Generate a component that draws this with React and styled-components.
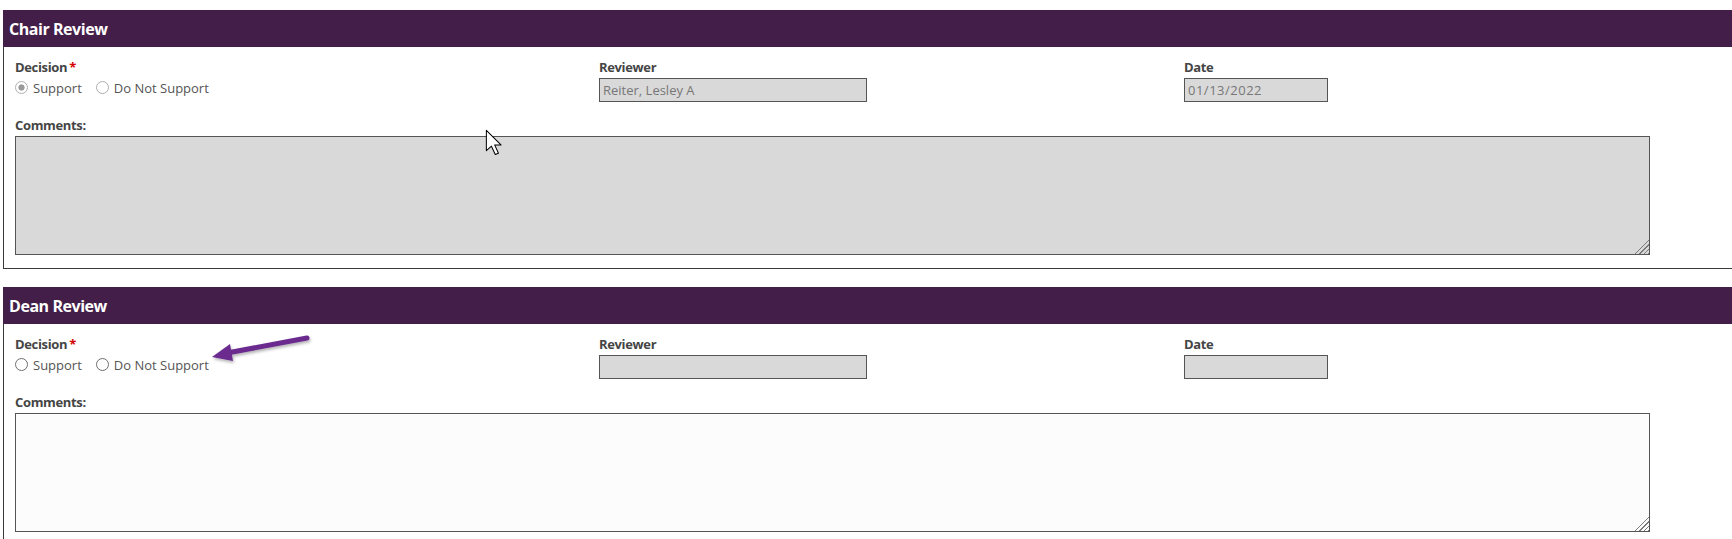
import React from "react";
import styled, { createGlobalStyle } from "styled-components";

const GlobalStyle = createGlobalStyle`
  html, body {
    margin: 0;
    padding: 0;
    background: #ffffff;
    overflow: hidden;
  }
  body {
    font-family: "Open Sans", "Liberation Sans", sans-serif;
  }
`;

function App() {
  return (
    <Page>
      <GlobalStyle />
      <ReviewPanel
        title="Chair Review"
        locked={true}
        decision="support"
        reviewer="Reiter, Lesley A"
        date="01/13/2022"
      />
      <ReviewPanel title="Dean Review" locked={false} decision="" reviewer="" date="" />

      <Annotation width="120" height="40" viewBox="0 0 120 40">
        <defs>
          <filter id="arrowShadow" x="-20%" y="-50%" width="140%" height="200%">
            <feDropShadow dx="1" dy="2" stdDeviation="1.5" floodColor="#000" floodOpacity="0.3" />
          </filter>
        </defs>
        <g filter="url(#arrowShadow)">
          <line x1="104" y1="6" x2="24" y2="21" stroke="#6a2a8e" strokeWidth="5" strokeLinecap="round" />
          <path d="M9 25 L27 12 L30 29 Z" fill="#6a2a8e" />
        </g>
      </Annotation>

      <Cursor width="18" height="28" viewBox="0 0 14 22">
        <path
          d="M1 1 L1 17 L5 13.5 L8 20 L10.5 19 L7.5 12.5 L12.5 12.5 Z"
          fill="#ffffff"
          stroke="#000000"
          strokeWidth="0.8"
          strokeLinejoin="round"
        />
      </Cursor>
    </Page>
  );
}

function ReviewPanel({ title, locked, decision, reviewer, date }) {
  const name = title.replace(" ", "");
  return (
    <Panel>
      <Header>{title}</Header>
      <Body>
        <FieldRow>
          <Field>
            <Label>
              Decision<Required>*</Required>
            </Label>
            <RadioGroup>
              <RadioOption>
                <Radio
                  type="radio"
                  name={name}
                  $locked={locked}
                  checked={decision === "support"}
                  readOnly
                />
                Support
              </RadioOption>
              <RadioOption>
                <Radio
                  type="radio"
                  name={name}
                  $locked={locked}
                  checked={decision === "nosupport"}
                  readOnly
                />
                Do Not Support
              </RadioOption>
            </RadioGroup>
          </Field>
          <Field>
            <Label>Reviewer</Label>
            <TextBox type="text" value={reviewer} readOnly $width="268px" />
          </Field>
          <Field>
            <Label>Date</Label>
            <TextBox type="text" value={date} readOnly $width="144px" $spaced />
          </Field>
        </FieldRow>
        <CommentLabel>Comments:</CommentLabel>
        <Comments readOnly={locked} $locked={locked} defaultValue="" />
      </Body>
    </Panel>
  );
}

const Page = styled.div`
  position: relative;
  padding: 10px 0 0 3px;
  width: 1732px;
  height: 539px;
  box-sizing: border-box;
  overflow: hidden;
`;

const Panel = styled.section`
  width: 1800px;
  border: 1px solid #3a3a3a;
  border-top: none;
  margin-bottom: 18px;
  box-sizing: border-box;
`;

const Header = styled.div`
  height: 37px;
  margin: 0 -1px;
  padding: 0 6px;
  display: flex;
  align-items: center;
  background: #431e48;
  color: #ffffff;
  font-size: 16px;
  font-weight: 700;
  letter-spacing: -0.45px;
`;

const Body = styled.div`
  padding: 12px 10px 13px 11px;
`;

const FieldRow = styled.div`
  display: grid;
  grid-template-columns: 584px 585px 1fr;
`;

const Field = styled.div`
  display: flex;
  flex-direction: column;
  align-items: flex-start;
`;

const Label = styled.label`
  font-size: 13px;
  line-height: 17px;
  font-weight: 700;
  color: #454545;
  letter-spacing: -0.35px;
  margin-bottom: 2px;
`;

const Required = styled.span`
  color: #d40000;
  font-size: 13px;
  margin-left: 2px;
`;

const RadioGroup = styled.div`
  display: flex;
  align-items: center;
  gap: 14px;
  height: 19px;
`;

const RadioOption = styled.label`
  display: flex;
  align-items: center;
  gap: 5px;
  font-size: 13px;
  color: #555555;
`;

const Radio = styled.input`
  appearance: none;
  margin: 0;
  width: 13px;
  height: 13px;
  border-radius: 50%;
  border: 1px solid ${(p) => (p.$locked ? "#b0b0b0" : "#6e6e6e")};
  background: #ffffff;
  box-sizing: border-box;
  &:checked {
    background: radial-gradient(circle, #9a9a9a 0 2.8px, #ffffff 3.4px);
  }
`;

const TextBox = styled.input`
  width: ${(p) => p.$width};
  height: 24px;
  box-sizing: border-box;
  border: 1px solid #555555;
  border-radius: 0;
  background: #d9d9d9;
  padding: 0 3px;
  font-family: "Open Sans", "Liberation Sans", sans-serif;
  font-size: 13px;
  letter-spacing: ${(p) => (p.$spaced ? "0.5px" : "0")};
  color: #777777;
  outline: none;
`;

const CommentLabel = styled(Label)`
  display: block;
  margin: 15px 0 2px;
`;

const Comments = styled.textarea`
  display: block;
  width: 1635px;
  height: 119px;
  margin: 0;
  box-sizing: border-box;
  border: 1px solid #555555;
  border-radius: 0;
  background: ${(p) => (p.$locked ? "#d9d9d9" : "#fcfcfc")};
  resize: both;
  outline: none;
  font-family: "Open Sans", "Liberation Sans", sans-serif;
  font-size: 13px;

  &::-webkit-resizer {
    background-color: transparent;
    background-image:
      linear-gradient(135deg, ${(p) => (p.$locked ? "#d9d9d9" : "#fcfcfc")} 52%, transparent 52%),
      repeating-linear-gradient(135deg, transparent 0 2px, #7a7a7a 2px 3px);
  }
`;

const Annotation = styled.svg`
  position: absolute;
  left: 203px;
  top: 332px;
  overflow: visible;
  pointer-events: none;
`;

const Cursor = styled.svg`
  position: absolute;
  left: 485px;
  top: 129px;
  pointer-events: none;
`;

export default App;
